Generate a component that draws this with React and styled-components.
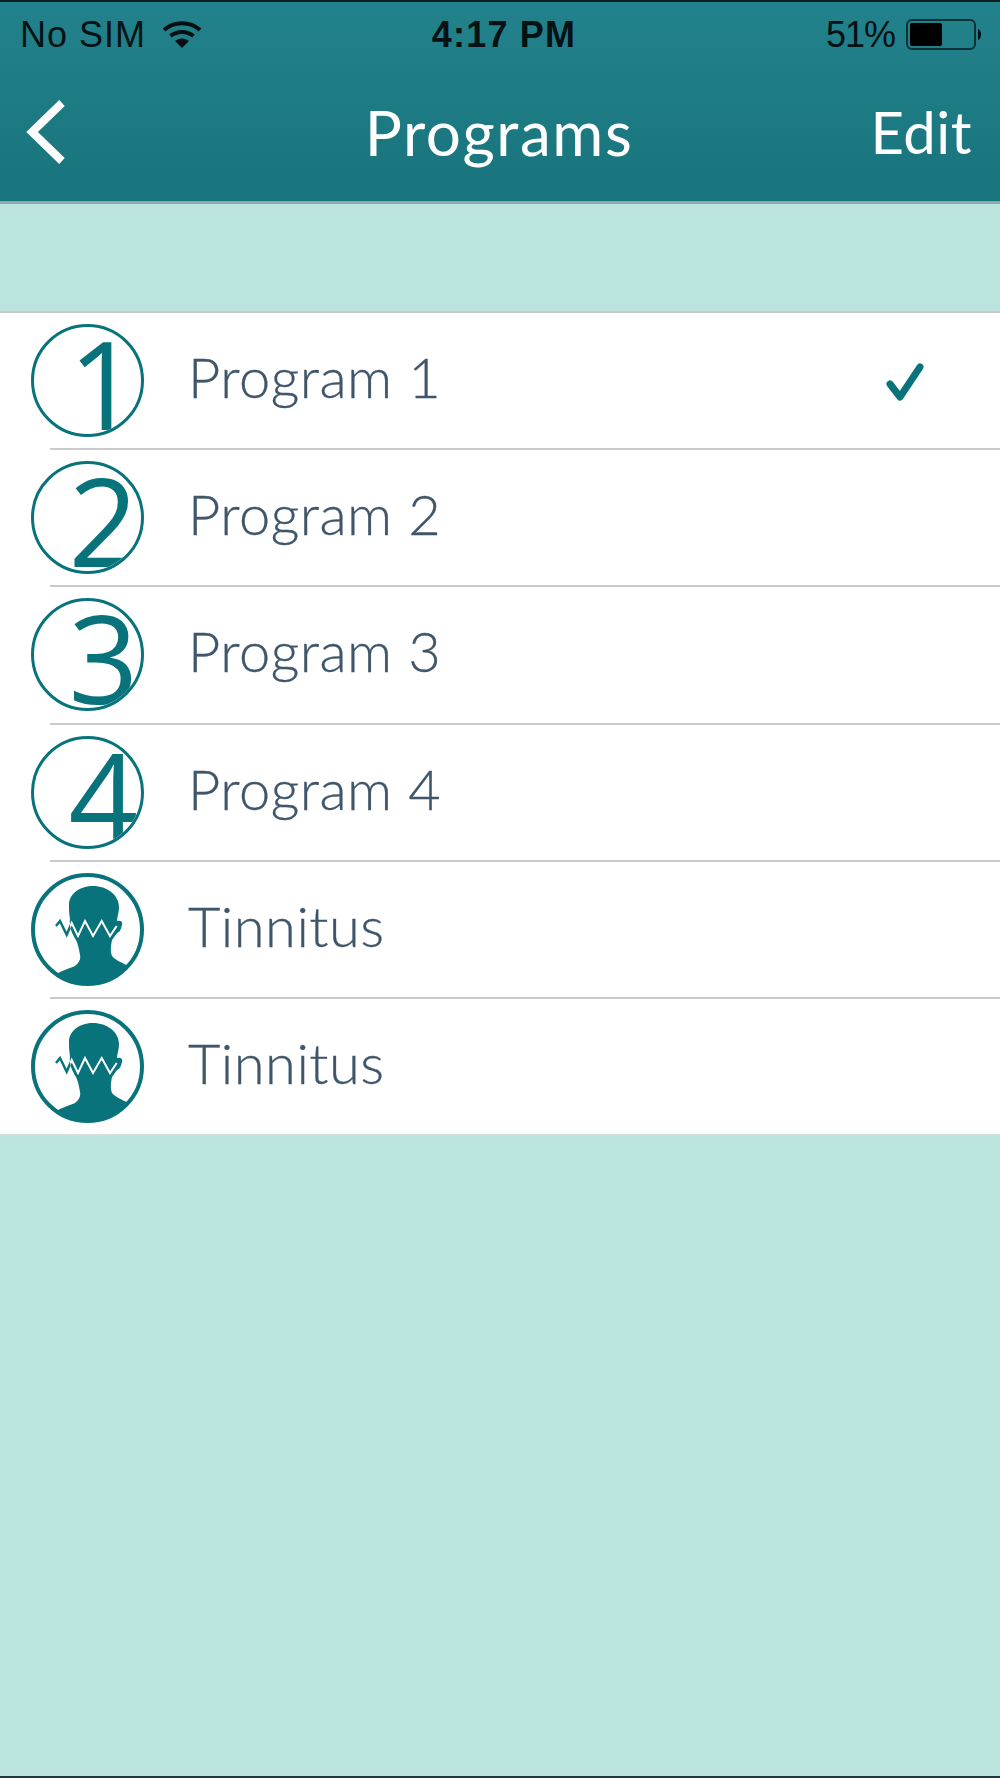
import React from 'react';
import styled, { createGlobalStyle } from 'styled-components';

const GlobalStyle = createGlobalStyle`
  html, body {
    margin: 0;
    padding: 0;
  }
  body {
    font-family: 'Lato', 'Open Sans', sans-serif;
  }
`;

const TEAL = '#08737a';
const HEAD_PATH =
  'M38 32 C38 20 50 13 62 13 C76 13 88 22 88 34 C88 40 86 44 86 48 C90 47 92 49 91 52 C90 56 89 59 86 60 L81 67 C80 72 79 78 81 83 C84 87 92 90 97 93 A54.500 54.500 0 0 1 25.700 101 C32 97 40 95 44 93 C48 90 50 86 49 82 C48 76 47 71 45 67 C41 61 38 54 39 46 C38 41 38 36 38 32 Z';
const WAVE_POINTS = '25,53 29,48 35.700,61.700 40.700,50 47,63 54,48 62,63 70.700,48 79,63 85.700,53';

const programs = [
  { id: 1, label: 'Program 1', digit: '1', active: true },
  { id: 2, label: 'Program 2', digit: '2' },
  { id: 3, label: 'Program 3', digit: '3' },
  { id: 4, label: 'Program 4', digit: '4' },
  { id: 5, label: 'Tinnitus', clipId: 'head-a' },
  { id: 6, label: 'Tinnitus', clipId: 'head-b' },
];

const WifiIcon = () => (
  <svg width="40" height="30" viewBox="0 0 40 30">
    <path d="M2 10 C12 1 28 1 38 10" fill="none" stroke="#050f12" strokeWidth="4" />
    <path d="M8.500 16 C15 10.500 25 10.500 31.500 16" fill="none" stroke="#050f12" strokeWidth="4" />
    <path d="M13 21 L20 28 L27 21 C23 17.500 17 17.500 13 21 Z" fill="#050f12" />
  </svg>
);

const BatteryIcon = () => (
  <svg width="78" height="32" viewBox="0 0 78 32">
    <rect x="1" y="1" width="68" height="29" rx="5" fill="none" stroke="#0b3338" strokeWidth="2" />
    <rect x="4" y="4" width="32" height="23" rx="2" fill="#000" />
    <path d="M72 10 C76 11 76 20 72 21 Z" fill="#050f12" />
  </svg>
);

const BackIcon = () => (
  <svg width="42" height="66" viewBox="0 0 42 66">
    <path d="M36 4 L6 33 L36 62" fill="none" stroke="#fff" strokeWidth="8" />
  </svg>
);

const CheckIcon = () => (
  <svg width="44" height="44" viewBox="0 0 44 44">
    <path
      d="M8 25 L18 38 L38 8"
      fill="none"
      stroke={TEAL}
      strokeWidth="7"
      strokeLinecap="round"
      strokeLinejoin="round"
    />
  </svg>
);

const TinnitusIcon = ({ clipId }) => (
  <svg width="113" height="113" viewBox="0 0 113 113">
    <defs>
      <clipPath id={clipId}>
        <path d={HEAD_PATH} />
      </clipPath>
    </defs>
    <circle cx="56.500" cy="56.500" r="54.500" fill="#fff" stroke={TEAL} strokeWidth="4" />
    <polyline points={WAVE_POINTS} fill="none" stroke={TEAL} strokeWidth="2.500" />
    <path d={HEAD_PATH} fill={TEAL} />
    <polyline
      points={WAVE_POINTS}
      fill="none"
      stroke="#fff"
      strokeWidth="2"
      clipPath={`url(#${clipId})`}
    />
  </svg>
);

export default function App() {
  return (
    <Screen>
      <GlobalStyle />
      <Header>
        <StatusBar>
          <StatusSide>
            <CarrierText>No SIM</CarrierText>
            <WifiIcon />
          </StatusSide>
          <StatusTime>4:17 PM</StatusTime>
          <BatterySide>
            <BatteryText>51%</BatteryText>
            <BatteryIcon />
          </BatterySide>
        </StatusBar>
        <NavBar>
          <BackButton><BackIcon /></BackButton>
          <Title>Programs</Title>
          <EditButton>Edit</EditButton>
        </NavBar>
      </Header>
      <Band />
      <List>
        {programs.map((program, index) => (
          <React.Fragment key={program.id}>
            {index > 0 && <Divider />}
            <Row>
              {program.digit ? (
                <Badge><Digit>{program.digit}</Digit></Badge>
              ) : (
                <IconSlot><TinnitusIcon clipId={program.clipId} /></IconSlot>
              )}
              <RowLabel>{program.label}</RowLabel>
              {program.active && <CheckSlot><CheckIcon /></CheckSlot>}
            </Row>
          </React.Fragment>
        ))}
      </List>
      <Filler />
    </Screen>
  );
}

const Screen = styled.div`
  display: flex;
  flex-direction: column;
  width: 1000px;
  height: 1778px;
  box-sizing: border-box;
  background: #bbe4df;
  border-bottom: 2px solid #1d3a3c;
  overflow: hidden;
`;

const Header = styled.header`
  height: 204px;
  box-sizing: border-box;
  border-top: 2px solid #0b1f22;
  border-bottom: 3px solid #8fa8a8;
  background: linear-gradient(180deg, #22828b 0%, #18747c 100%);
`;

const StatusBar = styled.div`
  display: flex;
  align-items: center;
  justify-content: space-between;
  height: 66px;
  padding: 0 16px 0 20px;
`;

const StatusSide = styled.div`
  display: flex;
  align-items: center;
  gap: 16px;
  width: 240px;
`;

const BatterySide = styled(StatusSide)`
  justify-content: flex-end;
  gap: 11px;
`;

const CarrierText = styled.span`
  font-family: 'Liberation Sans', Arial, sans-serif;
  font-size: 36px;
  letter-spacing: 1px;
  color: #061114;
`;

const BatteryText = styled(CarrierText)`
  letter-spacing: -1px;
`;

const StatusTime = styled.span`
  margin-left: 4px;
  font-family: 'Liberation Sans', Arial, sans-serif;
  font-size: 36px;
  font-weight: 700;
  letter-spacing: 1.2px;
  color: #061114;
`;

const NavBar = styled.div`
  display: flex;
  align-items: center;
  justify-content: space-between;
  height: 133px;
  box-sizing: border-box;
  padding: 0 28px 6px 26px;
`;

const BackButton = styled.div`
  display: flex;
  width: 110px;
`;

const Title = styled.h1`
  margin: 0;
  font-size: 62px;
  font-weight: 400;
  letter-spacing: 1.6px;
  color: #fff;
`;

const EditButton = styled.div`
  width: 110px;
  text-align: right;
  font-size: 58px;
  letter-spacing: 0.5px;
  color: #fff;
`;

const Band = styled.div`
  height: 107px;
`;

const List = styled.div`
  background: #fff;
  border-top: 2px solid #c8c8cc;
  border-bottom: 2px solid #d4dcdc;
`;

const Divider = styled.div`
  height: 2px;
  margin-left: 50px;
  background: #c9c9ce;
`;

const Row = styled.div`
  display: flex;
  align-items: center;
  height: 135.2px;
  padding-left: 31px;
`;

const Badge = styled.div`
  display: flex;
  justify-content: center;
  flex: none;
  width: 113px;
  height: 113px;
  box-sizing: border-box;
  border: 3px solid ${TEAL};
  border-radius: 50%;
  overflow: hidden;
`;

const Digit = styled.span`
  font-family: 'Open Sans', 'Lato', sans-serif;
  font-size: 122px;
  font-weight: 500;
  line-height: 96px;
  margin: 8px 0 0 32px;
  color: ${TEAL};
`;

const IconSlot = styled.div`
  display: flex;
  flex: none;
  width: 113px;
  height: 113px;
`;

const RowLabel = styled.span`
  margin-left: 44px;
  padding-bottom: 8px;
  font-size: 56px;
  font-weight: 300;
  letter-spacing: 0.5px;
  color: #3f566a;
  -webkit-text-stroke: 0.3px #3f566a;
`;

const CheckSlot = styled.div`
  display: flex;
  margin-left: auto;
  margin-right: 74px;
`;

const Filler = styled.div`
  flex: 1;
`;
